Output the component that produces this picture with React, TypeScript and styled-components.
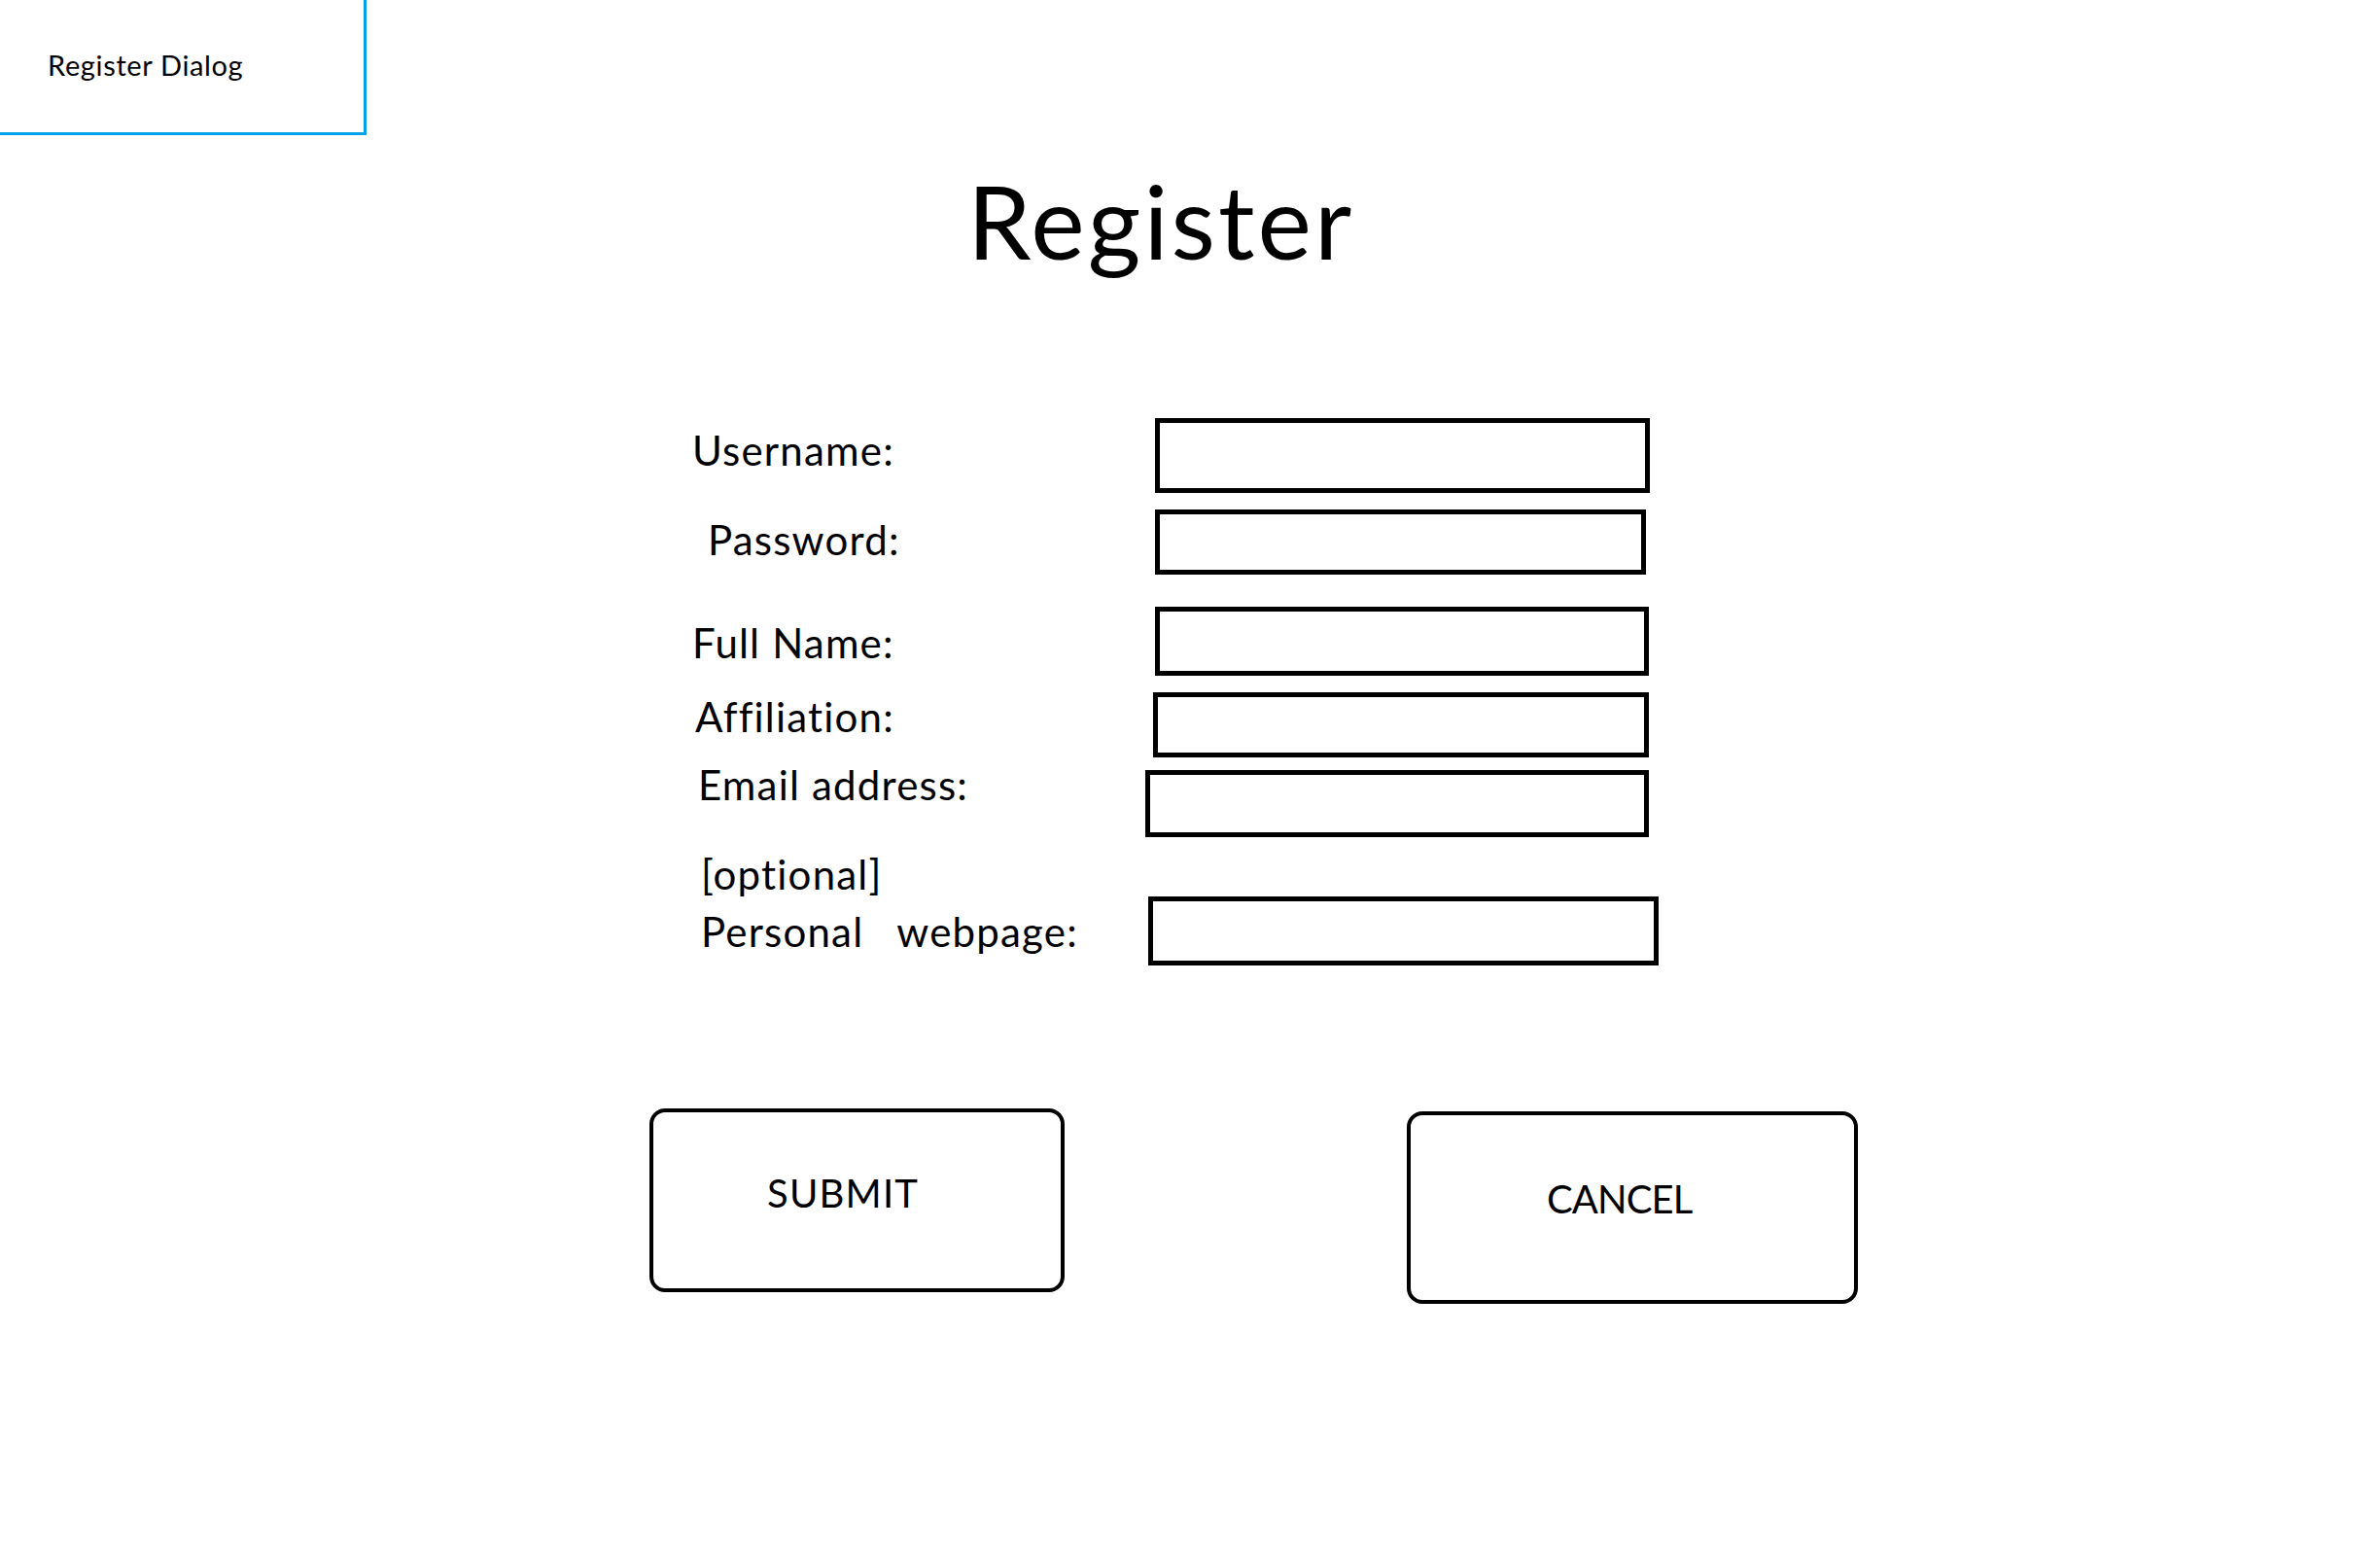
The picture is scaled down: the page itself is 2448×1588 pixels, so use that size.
import React from 'react';
import styled, { createGlobalStyle } from 'styled-components';

const GlobalStyle = createGlobalStyle`
  html, body {
    margin: 0;
    padding: 0;
    background: #ffffff;
  }
  body {
    font-family: Lato, "Open Sans", "Noto Sans", sans-serif;
    color: #000000;
  }
`;

const Page = styled.div`
  width: 2448px;
  height: 1588px;
  background: #ffffff;
  display: flex;
  flex-direction: column;
  align-items: flex-start;
  overflow: hidden;
`;

const TitleTab = styled.div`
  box-sizing: border-box;
  width: 377px;
  height: 139px;
  border-right: 3px solid #00a2e8;
  border-bottom: 3px solid #00a2e8;
  padding: 52px 0 0 49px;
  font-size: 29px;
  line-height: 29px;
  letter-spacing: 0.65px;
  white-space: nowrap;
`;

const Heading = styled.h1`
  margin: 35px 0 0 995px;
  font-size: 105px;
  line-height: 105px;
  font-weight: 400;
  letter-spacing: 3px;
  white-space: nowrap;
`;

const Form = styled.div`
  margin: 151px 0 0 700px;
  display: flex;
  flex-direction: column;
`;

const Row = styled.div<{ $gap: number }>`
  display: flex;
  align-items: flex-start;
  margin-top: ${(p) => p.$gap}px;
`;

const Label = styled.div<{ $indent: number; $offset: number; $lh: number }>`
  box-sizing: border-box;
  flex: 0 0 470px;
  width: 470px;
  padding-left: ${(p) => p.$indent}px;
  margin-top: ${(p) => p.$offset}px;
  font-size: 42px;
  line-height: ${(p) => p.$lh}px;
  letter-spacing: 1.2px;
  white-space: nowrap;
`;

const WordGap = styled.span`
  display: inline-block;
  width: 34px;
`;

const Field = styled.div<{ $shift: number; $w: number; $h: number }>`
  box-sizing: border-box;
  flex: 0 0 auto;
  margin-left: ${(p) => p.$shift}px;
  width: ${(p) => p.$w}px;
  height: ${(p) => p.$h}px;
  border: 5px solid #000000;
  background: #ffffff;
`;

const Actions = styled.div`
  margin: 147px 0 0 668px;
  display: flex;
  align-items: flex-start;
`;

const ActionButton = styled.button<{
  $w: number;
  $h: number;
  $top: number;
  $left: number;
  $padTop: number;
  $padLeft: number;
  $ls: number;
}>`
  box-sizing: border-box;
  width: ${(p) => p.$w}px;
  height: ${(p) => p.$h}px;
  margin-top: ${(p) => p.$top}px;
  margin-left: ${(p) => p.$left}px;
  padding: ${(p) => p.$padTop}px 0 0 ${(p) => p.$padLeft}px;
  border: 4px solid #000000;
  border-radius: 16px;
  background: #ffffff;
  color: #000000;
  font-family: Lato, "Open Sans", "Noto Sans", sans-serif;
  font-size: 40px;
  line-height: 48px;
  letter-spacing: ${(p) => p.$ls}px;
  text-align: left;
  display: flex;
  align-items: flex-start;
  cursor: pointer;
`;

type RowSpec = {
  label: React.ReactNode;
  indent: number;
  offset: number;
  lh: number;
  gap: number;
  shift: number;
  w: number;
  h: number;
};

const rows: RowSpec[] = [
  { label: 'Username:', indent: 12, offset: 9, lh: 48, gap: 0, shift: 18, w: 509, h: 77 },
  { label: 'Password:', indent: 28, offset: 7, lh: 48, gap: 17, shift: 18, w: 505, h: 67 },
  { label: 'Full Name:', indent: 12, offset: 13, lh: 48, gap: 33, shift: 18, w: 508, h: 71 },
  { label: 'Affiliation:', indent: 15, offset: 1, lh: 48, gap: 17, shift: 16, w: 510, h: 67 },
  { label: 'Email address:', indent: 18, offset: -9, lh: 48, gap: 13, shift: 8, w: 518, h: 69 },
  {
    label: (
      <>
        [optional]
        <br />
        Personal
        <WordGap />
        webpage:
      </>
    ),
    indent: 21,
    offset: -52,
    lh: 59,
    gap: 61,
    shift: 11,
    w: 525,
    h: 71,
  },
];

export default function App() {
  return (
    <>
      <GlobalStyle />
      <Page>
        <TitleTab>Register Dialog</TitleTab>
        <Heading>Register</Heading>
        <Form>
          {rows.map((r, i) => (
            <Row key={i} $gap={r.gap}>
              <Label $indent={r.indent} $offset={r.offset} $lh={r.lh}>
                {r.label}
              </Label>
              <Field $shift={r.shift} $w={r.w} $h={r.h} />
            </Row>
          ))}
        </Form>
        <Actions>
          <ActionButton $w={427} $h={189} $top={0} $left={0} $padTop={59} $padLeft={117} $ls={1.2}>
            SUBMIT
          </ActionButton>
          <ActionButton $w={464} $h={198} $top={3} $left={352} $padTop={62} $padLeft={140} $ls={-0.9}>
            CANCEL
          </ActionButton>
        </Actions>
      </Page>
    </>
  );
}
